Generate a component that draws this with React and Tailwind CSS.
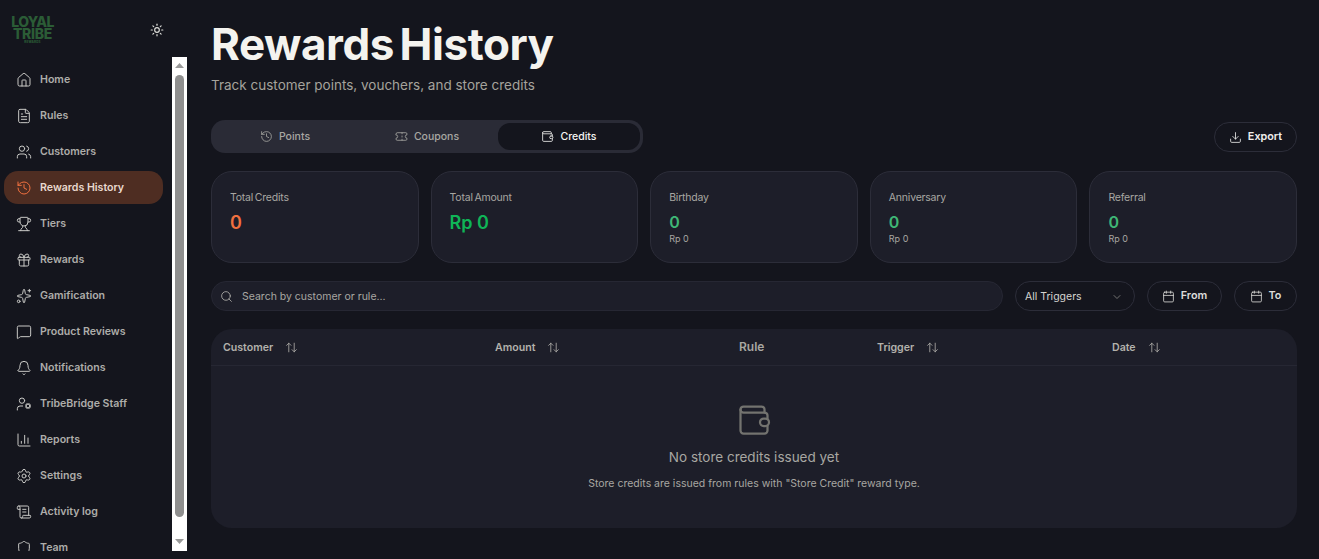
import React from "react";
import {
  House, FileText, Users, History, Trophy, Gift, Sparkles, MessageSquare, Bell, UserCog,
  ChartColumn, Settings, ScrollText, Shield, Sun, Ticket, Download, Calendar, Search,
  ChevronDown, ArrowUpDown,
} from "lucide-react";

const nav = [
  [House, "Home"], [FileText, "Rules"], [Users, "Customers"], [History, "Rewards History", true],
  [Trophy, "Tiers"], [Gift, "Rewards"], [Sparkles, "Gamification"], [MessageSquare, "Product Reviews"],
  [Bell, "Notifications"], [UserCog, "TribeBridge Staff"], [ChartColumn, "Reports"], [Settings, "Settings"],
  [ScrollText, "Activity log"], [Shield, "Team"],
];

const stats = [
  { label: "Total Credits", value: "0", color: "text-[#f0703f]", big: true },
  { label: "Total Amount", value: "Rp 0", color: "text-[#0fb557]", big: true },
  { label: "Birthday", value: "0", sub: "Rp 0" },
  { label: "Anniversary", value: "0", sub: "Rp 0" },
  { label: "Referral", value: "0", sub: "Rp 0" },
];

function WalletIcon({ size, className, strokeWidth = 1.5, claspFill = "none" }) {
  return (
    <svg width={size} height={size} viewBox="0 0 24 24" fill="none" stroke="currentColor" strokeWidth={strokeWidth} strokeLinecap="round" strokeLinejoin="round" className={className}>
      <path d="M19 7V5a2 2 0 0 0-2-2H5a2 2 0 0 0-2 2v14a2 2 0 0 0 2 2h14a2 2 0 0 0 2-2v-3" />
      <path d="M3 5a2 2 0 0 0 2 2h14a2 2 0 0 1 2 2v2" />
      <rect x="16" y="11" width="6" height="5" rx="2.5" fill={claspFill} />
    </svg>
  );
}

function Sort({ label, w }) {
  return (
    <div className={`${w} flex items-center gap-[12px] pl-3 pt-[1px] text-[10.6px] font-semibold text-[#b3b2ac]`}>
      <span>{label}</span>
      <ArrowUpDown size={13} strokeWidth={1.5} />
    </div>
  );
}

export default function App() {
  return (
    <div className="flex h-[559px] overflow-hidden bg-[#14151d] font-['Inter',sans-serif]">
      <aside className="flex w-[187px] shrink-0 flex-col">
        <div className="flex h-[57px] shrink-0 items-start justify-between pl-[11px] pr-[23px] pt-[16px]">
          <div className="flex w-[43px] flex-col items-center font-extrabold text-[#2b5c36]">
            <span className="text-[14px] leading-[12px] tracking-[-0.05em]">LOYAL</span>
            <span className="text-[14px] leading-[11px] tracking-[-0.02em]">TRIBE</span>
            <span className="text-[3px] leading-[6px] tracking-[0.05em]">REWARDS</span>
          </div>
          <Sun size={14} strokeWidth={2} className="mt-[7px] text-[#dededa]" />
        </div>
        <div className="flex h-[494px] shrink-0">
          <nav className="flex w-[172px] shrink-0 flex-col gap-[3px] overflow-hidden pl-[4px] pr-[9px] pt-[6px]">
            {nav.map(([Icon, label, active]) => (
              <div
                key={label}
                className={`flex h-[33px] shrink-0 items-center gap-[8px] rounded-[14px] pl-[12px] text-[10.6px] font-semibold ${
                  active ? "bg-[#4e2d22] text-[#e9d9cf]" : "text-[#aeadaa]"
                }`}
              >
                <Icon size={16} strokeWidth={1.5} className={active ? "text-[#f0703f]" : "text-[#c9c9c6]"} />
                <span>{label}</span>
              </div>
            ))}
          </nav>
          <div className="flex w-[15px] shrink-0 flex-col items-center bg-white pt-[6px]">
            <svg width="9" height="5" viewBox="0 0 9 5" className="shrink-0"><polygon points="4.5,0 9,5 0,5" fill="#9a9a9a" /></svg>
            <div className="mt-[7px] h-[442px] w-[9px] shrink-0 rounded-[5px] bg-[#8f8f8f]" />
            <svg width="9" height="5" viewBox="0 0 9 5" className="mt-[22px] shrink-0"><polygon points="0,0 9,0 4.5,5" fill="#9a9a9a" /></svg>
          </div>
        </div>
      </aside>

      <main className="min-w-0 flex-1 pl-[24px] pr-[22px] pt-[16px]">
        <h1 className="text-[44px] font-bold leading-[56px] tracking-[-0.01em] text-[#f4f3ef] [word-spacing:-0.1em]">Rewards History</h1>
        <p className="mt-[3px] text-[13.5px] leading-[20px] text-[#a5a39c]">Track customer points, vouchers, and store credits</p>

        <div className="mt-[25px] flex items-center justify-between">
          <div className="grid h-[33px] w-[432px] grid-cols-3 rounded-[14px] bg-[#2a2b36] p-[3px] text-[10.5px] font-medium">
            <div className="flex items-center justify-center gap-[6px] text-[#a8a7a2]"><History size={13} strokeWidth={1.5} />Points</div>
            <div className="flex items-center justify-center gap-[6px] text-[#a8a7a2]"><Ticket size={13} strokeWidth={1.5} />Coupons</div>
            <div className="flex items-center justify-center gap-[6px] rounded-[12px] bg-[#14151d] text-[#f4f4f2]"><WalletIcon size={13} />Credits</div>
          </div>
          <div className="flex h-[30px] w-[83px] items-center justify-center gap-[6px] rounded-[15px] border border-[#2c2d39] pt-[1px] text-[10.8px] font-semibold text-[#eeeeec]">
            <Download size={13} strokeWidth={1.5} />Export
          </div>
        </div>

        <div className="mt-[18px] grid grid-cols-5 gap-[12px]">
          {stats.map((s) => (
            <div key={s.label} className="h-[92px] rounded-[21px] border border-[#2c2d39] bg-[#1d1e29] pl-[18px] pt-[19px]">
              <div className="text-[10.5px] leading-[14px] tracking-[-0.02em] text-[#a8a7a2] [word-spacing:-0.1em]">{s.label}</div>
              {s.big ? (
                <div className={`mt-[6px] text-[18px] font-semibold leading-[24px] ${s.color}`}>{s.value}</div>
              ) : (
                <>
                  <div className="mt-[7px] text-[16px] font-semibold leading-[20px] text-[#3fb776]">{s.value}</div>
                  <div className="mt-[1px] text-[9px] leading-[12px] text-[#a8a7a2]">{s.sub}</div>
                </>
              )}
            </div>
          ))}
        </div>

        <div className="mt-[18px] flex h-[30px] items-stretch gap-[12px]">
          <div className="flex flex-1 items-center gap-[9px] rounded-[15px] border border-[#262733] bg-[#1d1e29] pl-[8px] pt-[1px] text-[10.5px] text-[#a8a7a2]">
            <Search size={13} strokeWidth={1.5} className="text-[#b5b4af]" />
            <span>Search by customer or rule...</span>
          </div>
          <div className="flex w-[120px] items-center justify-between rounded-[15px] border border-[#2c2d39] pl-[9px] pr-[11px] pt-[1px] text-[10.5px] text-[#d4d4d0]">
            <span>All Triggers</span>
            <ChevronDown size={12} strokeWidth={1.5} className="text-[#8f8f8b]" />
          </div>
          <div className="flex w-[75px] items-center justify-center gap-[6px] rounded-[15px] border border-[#2c2d39] pt-[1px] text-[10.8px] font-semibold text-[#dcdcd9]">
            <Calendar size={13} strokeWidth={1.5} />From
          </div>
          <div className="flex w-[63px] items-center justify-center gap-[6px] rounded-[15px] border border-[#2c2d39] pt-[1px] text-[10.8px] font-semibold text-[#dcdcd9]">
            <Calendar size={13} strokeWidth={1.5} />To
          </div>
        </div>

        <section className="mt-[18px] h-[199px] rounded-[21px] bg-[#1d1e29]">
          <div className="flex h-[37px] items-center border-b border-[#262733]">
            <Sort label="Customer" w="w-[272px]" />
            <Sort label="Amount" w="w-[244px]" />
            <div className="w-[138px] pl-3 text-[12px] font-semibold text-[#a8a7a2]">Rule</div>
            <Sort label="Trigger" w="w-[235px]" />
            <Sort label="Date" w="flex-1" />
          </div>
          <div className="flex flex-col items-center pt-[36px]">
            <WalletIcon size={36} className="text-[#73736f]" claspFill="#1d1e29" />
            <div className="mt-[9px] text-[13.5px] leading-[20px] text-[#a8a7a2]">No store credits issued yet</div>
            <div className="mt-[10px] text-[10.5px] leading-[14px] text-[#a8a7a2]">Store credits are issued from rules with "Store Credit" reward type.</div>
          </div>
        </section>
      </main>
    </div>
  );
}
